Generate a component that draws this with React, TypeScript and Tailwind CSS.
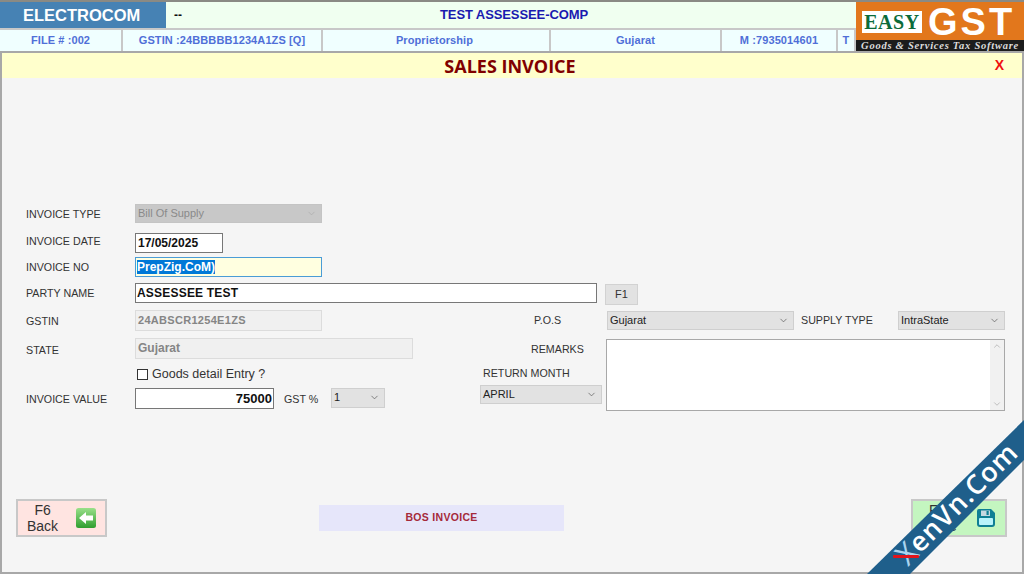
import { ChevronDown, ChevronUp } from "lucide-react"

const sans = "font-['Liberation_Sans',Arial,sans-serif]"

function Label({ children, className = "" }: { children: React.ReactNode; className?: string }) {
  return <div className={`text-[10.7px] leading-[14px] text-[#333] whitespace-nowrap ${className}`}>{children}</div>
}

function Select({ value, className = "", disabled = false }: { value: string; className?: string; disabled?: boolean }) {
  return (
    <div
      className={`flex items-center justify-between pl-[2px] pr-[4px] text-[11px] border ${
        disabled ? "bg-[#c8c8c8] border-[#c4c4c4] text-[#8a8a8a]" : "bg-[#e2e2e2] border-[#cfcfcf] text-[#222]"
      } ${className}`}
    >
      <span>{value}</span>
      <ChevronDown size={11} strokeWidth={1.5} className={disabled ? "text-[#aaa]" : "text-[#555]"} />
    </div>
  )
}

function HeaderCell({ children, className = "" }: { children: React.ReactNode; className?: string }) {
  return (
    <div className={`flex items-center justify-center border-r-2 border-[#c8c8c8] text-[11px] font-bold tracking-[0.1px] text-[#4f6fd8] whitespace-nowrap overflow-hidden ${className}`}>
      {children}
    </div>
  )
}

function Logo() {
  return (
    <div className="w-[168px] h-[49px] flex flex-col bg-[#e2771c] shrink-0">
      <div className="h-[38px] flex items-center pl-[6px] gap-[6px] pt-[1px] overflow-hidden">
        <div className="w-[60px] h-[22px] bg-white flex items-center justify-center font-['Liberation_Serif',serif] font-bold text-[20px] text-[#0b6b3a] tracking-[0.6px]">
          EASY
        </div>
        <div className={`${sans} font-bold text-[38px] leading-[30px] text-white tracking-[3px]`}>GST</div>
      </div>
      <div className="h-[11px] bg-[#1c1c1c] flex items-center justify-center font-['Liberation_Serif',serif] italic font-bold text-[10.5px] leading-[11px] tracking-[0.75px] text-[#ddd] whitespace-nowrap">
        Goods &amp; Services Tax Software
      </div>
    </div>
  )
}

function BackIcon() {
  return (
    <svg width="20" height="20" viewBox="0 0 20 20">
      <defs>
        <linearGradient id="back" x1="0" y1="0" x2="0" y2="1">
          <stop offset="0" stopColor="#9ae08a" />
          <stop offset="1" stopColor="#2f9e2f" />
        </linearGradient>
      </defs>
      <rect width="20" height="20" rx="2.5" fill="url(#back)" />
      <path d="M3 10 L10 4 V7.5 H17 V12.5 H10 V16 Z" fill="#fff" />
    </svg>
  )
}

function SaveIcon() {
  return (
    <svg width="20" height="20" viewBox="0 0 20 20">
      <path d="M3 1 H15 L19 5 V16 Q19 19 16 19 H4 Q1 19 1 16 V3 Q1 1 3 1 Z" fill="#0f7f94" />
      <rect x="3" y="10" width="14" height="7" rx="1" fill="#b9f3fb" />
      <rect x="5" y="2.5" width="9" height="5.5" fill="#c5d8e0" />
      <rect x="10.5" y="3" width="2.2" height="4" fill="#0f7f94" />
    </svg>
  )
}

function Watermark() {
  return (
    <svg className="absolute left-[860px] top-[410px] pointer-events-none" width="164" height="164" viewBox="860 410 164 164">
      <polygon points="1024,420 1024,460 910,574 867,574" fill="#1f5f8b" />
      <text transform="translate(908 567) rotate(-45)" fontFamily="'Open Sans',sans-serif" fontSize="30" fill="#a9d4f0">X</text>
      <text transform="translate(920 554) rotate(-45)" fontFamily="'Open Sans',sans-serif" fontSize="27" fontWeight="600" letterSpacing="1" fill="#fff">enVn.Com</text>
      <rect x="893" y="555" width="26" height="3" rx="1" fill="#e0141c" />
    </svg>
  )
}

export default function App() {
  return (
    <div className={`${sans} relative w-[1024px] h-[574px] overflow-hidden bg-[#f5f5f5] flex flex-col`}>
      <div className="flex border-t-2 border-[#8a8a84] h-[51px] shrink-0">
        <div className="flex-1 flex flex-col min-w-0">
          <div className="h-[26px] flex bg-[#f0fff0]">
            <div className="w-[166px] bg-[#4682b4] text-white font-bold text-[16.5px] flex items-center pl-[23px]">ELECTROCOM</div>
            <div className="w-[20px] ml-[8px] font-bold text-[12px] text-[#111] flex items-center">--</div>
            <div className="flex-1 flex items-center justify-center pr-[22px] font-bold text-[13px] text-[#1a1ab0] tracking-[-0.1px]">TEST ASSESSEE-COMP</div>
          </div>
          <div className="h-[23px] flex bg-[#f0ffff] border-t-2 border-[#c8c8c8]">
            <HeaderCell className="w-[123px]">FILE # :002</HeaderCell>
            <HeaderCell className="w-[200px]">GSTIN :24BBBBB1234A1ZS [Q]</HeaderCell>
            <HeaderCell className="w-[228px] pr-[3px]">Proprietorship</HeaderCell>
            <HeaderCell className="w-[171px]">Gujarat</HeaderCell>
            <HeaderCell className="w-[116px]">M :7935014601</HeaderCell>
            <HeaderCell className="flex-1 border-r-0">T</HeaderCell>
          </div>
        </div>
        <Logo />
      </div>

      <div className="flex-1 flex flex-col border-2 border-[#a8a8a8] min-h-0">
        <div className="h-[25px] shrink-0 bg-[#ffffcc] flex items-center relative">
          <div className="w-full text-center pr-[4px] pt-[1px] font-['Open_Sans',sans-serif] font-bold text-[18px] leading-[25px] text-[#800000]">SALES INVOICE</div>
          <div className={`absolute right-[18px] top-[2px] font-bold text-[14px] text-[#f01010]`}>X</div>
        </div>

        <div className="flex-1 flex flex-col pt-[125px] pl-[24px] pr-[15px] pb-[35px] min-h-0">
          <div className="flex items-center h-[20px]">
            <Label className="w-[109px] mt-[1px]">INVOICE TYPE</Label>
            <Select value="Bill Of Supply" disabled className="w-[187px] h-[19px]" />
          </div>

          <div className="flex items-center h-[21px] mt-[9px]">
            <Label className="w-[109px] -mt-[3px]">INVOICE DATE</Label>
            <div className="w-[88px] h-[20px] bg-white border border-[#777] pl-[2px] text-[12px] leading-[18px] font-bold text-[#111]">17/05/2025</div>
          </div>

          <div className="flex items-center h-[20px] mt-[4px]">
            <Label className="w-[109px]">INVOICE NO</Label>
            <div className="w-[187px] h-[20px] bg-[#ffffe0] border border-[#4a9cd6] pl-[1px] flex items-center">
              <span className="bg-[#0078d7] text-white text-[12px] leading-[14px] font-bold">PrepZig.CoM)</span>
            </div>
          </div>

          <div className="flex h-[22px] mt-[6px]">
            <Label className="w-[109px] leading-[20px]">PARTY NAME</Label>
            <div className="w-[462px] h-[20px] bg-white border border-[#777] pl-[1px] text-[12px] leading-[18px] font-bold tracking-[0.2px] text-[#111]">ASSESSEE TEST</div>
            <div className="ml-[8px] w-[33px] h-[21px] mt-[1px] bg-[#e2e2e2] border border-[#d2d2d2] text-[11px] text-[#333] flex items-center justify-center">F1</div>
          </div>

          <div className="flex mt-[5px] h-[101px]">
            <div className="w-[454px] flex flex-col">
              <div className="flex items-center h-[21px]">
                <Label className="w-[109px]">GSTIN</Label>
                <div className="w-[187px] h-[21px] bg-[#f0f0f0] border border-[#dcdcdc] pl-[2px] text-[11px] leading-[19px] font-bold tracking-[0.3px] text-[#858585]">24ABSCR1254E1ZS</div>
              </div>
              <div className="flex items-center h-[21px] mt-[7px]">
                <Label className="w-[109px] mt-[2px]">STATE</Label>
                <div className="w-[278px] h-[21px] bg-[#f0f0f0] border border-[#dcdcdc] pl-[2px] text-[12px] leading-[19px] font-bold text-[#858585]">Gujarat</div>
              </div>
              <div className="flex items-center h-[16px] mt-[7px] ml-[109px] pl-[2px] gap-[4px]">
                <div className="w-[11px] h-[11px] border border-[#333] bg-white" />
                <span className="text-[12.5px] text-[#333]">Goods detail Entry ?</span>
              </div>
              <div className="flex items-center h-[21px] mt-[6px]">
                <Label className="w-[109px]">INVOICE VALUE</Label>
                <div className="w-[139px] h-[21px] bg-white border border-[#777] pr-[1px] text-right text-[13px] leading-[19px] font-bold text-[#111]">75000</div>
                <Label className="ml-[10px] w-[47px]">GST %</Label>
                <Select value="1" className="w-[54px] h-[20px] -mt-[2px]" />
              </div>
            </div>

            <div className="w-[126px] flex flex-col">
              <Label className="mt-[3px] ml-[54px]">P.O.S</Label>
              <Label className="mt-[15px] ml-[51px]">REMARKS</Label>
              <Label className="mt-[10px] ml-[3px]">RETURN MONTH</Label>
              <Select value="APRIL" className="w-[122px] h-[19px] mt-[5px]" />
            </div>

            <div className="w-[399px] flex flex-col">
              <div className="flex items-center h-[20px]">
                <Select value="Gujarat" className="w-[187px] h-[19px] ml-[1px]" />
                <Label className="ml-[7px] w-[97px]">SUPPLY TYPE</Label>
                <Select value="IntraState" className="w-[107px] h-[19px]" />
              </div>
              <div className="mt-[9px] h-[72px] bg-white border border-[#a8a8a8] flex justify-end">
                <div className="w-[14px] bg-[#f1f1f1] flex flex-col justify-between items-center py-[1px]">
                  <ChevronUp size={10} className="text-[#b5b5b5]" />
                  <ChevronDown size={10} className="text-[#b5b5b5]" />
                </div>
              </div>
            </div>
          </div>

          <div className="mt-auto flex items-center -ml-[10px]">
            <div className="w-[91px] h-[38px] bg-[#ffe4e1] border-2 border-[#c8c8c8] flex items-center pl-[9px] gap-[18px]">
              <div className="text-[14px] leading-[16px] text-[#333] text-center">F6<br />Back</div>
              <BackIcon />
            </div>
            <div className="ml-[212px] w-[245px] h-[26px] bg-[#e6e6fa] flex items-center justify-center text-[10.5px] font-bold tracking-[0.3px] text-[#a52a3a]">BOS INVOICE</div>
            <div className="ml-auto w-[96px] h-[38px] bg-[#c4f6c0] border-2 border-[#c8c8c8] flex items-center justify-between pl-[12px] pr-[9px]">
              <div className="text-[14px] leading-[16px] text-[#333] text-center">F10<br />Save</div>
              <SaveIcon />
            </div>
          </div>
        </div>
      </div>

      <Watermark />
    </div>
  )
}
